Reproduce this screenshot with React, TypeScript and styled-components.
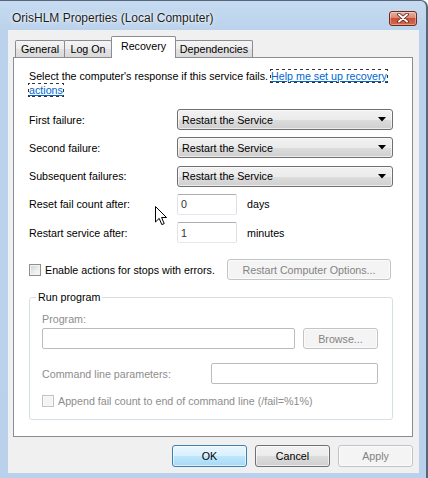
import React from "react";
import styled, { createGlobalStyle } from "styled-components";

const GlobalStyle = createGlobalStyle`
  html, body {
    margin: 0;
    padding: 0;
    background: #fff;
  }
  body {
    font-family: "Liberation Sans", Arial, sans-serif;
  }
`;

const Window = styled.div`
  position: relative;
  width: 428px;
  height: 478px;
  box-sizing: border-box;
  display: flex;
  flex-direction: column;
  background: linear-gradient(to bottom, #c6dbf1 0, #bad2eb 30px, #b9d1ea 100%);
  border-top: 1px solid #56677a;
  border-right: 2px solid #56677a;
  border-top-right-radius: 7px;
  overflow: hidden;
  font-family: "Liberation Sans", Arial, sans-serif;
  font-size: 10.7px;
  color: #000;
`;

const TitleBar = styled.div`
  height: 29px;
  box-sizing: border-box;
  padding: 5px 9px 0 12px;
  display: flex;
  align-items: center;
`;

const Title = styled.div`
  font-size: 12px;
  color: #1b1b1b;
  text-shadow: 0 0 6px rgba(255, 255, 255, 0.95), 0 0 2px #fff;
`;

const CloseButton = styled.div`
  margin-left: auto;
  width: 28px;
  height: 15px;
  box-sizing: border-box;
  border: 1px solid #6d2a1e;
  border-radius: 3px;
  background: linear-gradient(
    to bottom,
    #eab0a2 0%,
    #dc8670 45%,
    #c8503a 50%,
    #d8684a 100%
  );
  box-shadow: inset 0 0 0 1px rgba(255, 255, 255, 0.35);
  display: flex;
  align-items: center;
  justify-content: center;
`;

const Client = styled.div`
  flex: 1;
  margin: 0 7px 5px 8px;
  padding: 6px 6px 0 5px;
  background: #f0f0f0;
  display: flex;
  flex-direction: column;
`;

const TabStrip = styled.div`
  height: 22px;
  margin-bottom: -1px;
  padding-left: 2px;
  display: flex;
  align-items: flex-start;
  position: relative;
  z-index: 1;
`;

const Tab = styled.div<{ $w: number; $active?: boolean }>`
  width: ${(p) => p.$w}px;
  box-sizing: border-box;
  margin-left: -1px;
  &:first-child {
    margin-left: 0;
  }
  border: 1px solid #898c95;
  border-bottom: none;
  border-radius: 2px 2px 0 0;
  display: flex;
  align-items: center;
  justify-content: center;
  margin-top: ${(p) => (p.$active ? 0 : 4)}px;
  height: ${(p) => (p.$active ? 22 : 17)}px;
  padding-bottom: ${(p) => (p.$active ? 3 : 0)}px;
  background: ${(p) =>
    p.$active
      ? "#fff"
      : "linear-gradient(to bottom, #f4f4f4 0%, #ececec 50%, #e2e2e2 51%, #dadada 100%)"};
  position: relative;
  z-index: ${(p) => (p.$active ? 2 : 1)};
`;

const Panel = styled.div`
  height: 380px;
  box-sizing: border-box;
  background: #fff;
  border: 1px solid #898c95;
  padding: 11px 19px 0 15px;
  display: flex;
  flex-direction: column;
`;

const Intro = styled.p`
  margin: 0;
  line-height: 14px;
`;

const Link = styled.a`
  color: #0066cc;
  text-decoration: underline;
  outline: 1px dotted #333;
  cursor: pointer;
`;

const FormGrid = styled.div`
  margin-top: 12px;
  display: grid;
  grid-template-columns: 148px 1fr;
  grid-auto-rows: 21px;
  row-gap: 7.25px;
  align-items: center;
`;

const Label = styled.span<{ $disabled?: boolean }>`
  line-height: 14px;
  color: ${(p) => (p.$disabled ? "#8d8d8d" : "#000")};
  white-space: nowrap;
`;

const Combo = styled.div`
  height: 21px;
  box-sizing: border-box;
  border: 1px solid #707070;
  border-radius: 3px;
  background: linear-gradient(
    to bottom,
    #f2f2f2 0%,
    #ebebeb 50%,
    #dddddd 51%,
    #cfcfcf 100%
  );
  box-shadow: inset 0 0 0 1px rgba(255, 255, 255, 0.6);
  padding: 0 6px 0 4px;
  display: flex;
  align-items: center;
  justify-content: space-between;
`;

const InputCell = styled.div`
  display: flex;
  align-items: center;
`;

const TextBox = styled.div<{ $w: number; $disabled?: boolean }>`
  width: ${(p) => p.$w}px;
  height: 21px;
  box-sizing: border-box;
  border: 1px solid;
  border-color: ${(p) =>
    p.$disabled ? "#bcbcbc" : "#abadb3 #dbdfe6 #e3e9ef #e2e3ea"};
  border-radius: 2px;
  background: #fff;
  padding-left: 3px;
  display: flex;
  align-items: center;
  color: #333;
`;

const Unit = styled.span`
  margin-left: 10px;
`;

const CheckRow = styled.div`
  margin-top: 16px;
  height: 21px;
  display: flex;
  align-items: center;
`;

const CheckBox = styled.span<{ $disabled?: boolean }>`
  width: 12px;
  height: 12px;
  box-sizing: border-box;
  flex-shrink: 0;
  border: 1px solid ${(p) => (p.$disabled ? "#c2c2c2" : "#8e8f8f")};
  background: ${(p) =>
    p.$disabled
      ? "#f4f4f4"
      : "linear-gradient(135deg, #cfd1d4 0%, #eeeeee 60%, #fafafa 100%)"};
  box-shadow: inset 0 0 0 1px ${(p) => (p.$disabled ? "#f8f8f8" : "#f2f2f2")};
  margin-right: 4px;
`;

const Button = styled.div<{ $w: number; $variant?: "default" | "primary" | "disabled" }>`
  width: ${(p) => p.$w}px;
  height: 21px;
  box-sizing: border-box;
  border-radius: 3px;
  display: flex;
  align-items: center;
  justify-content: center;
  border: 1px solid
    ${(p) =>
      p.$variant === "primary"
        ? "#3c7fb1"
        : p.$variant === "disabled"
        ? "#c2c5c8"
        : "#707070"};
  color: ${(p) => (p.$variant === "disabled" ? "#838383" : "#000")};
  background: ${(p) =>
    p.$variant === "primary"
      ? "linear-gradient(to bottom, #eaf6fd 0%, #d9f0fc 50%, #bee6fd 51%, #a7d9f5 100%)"
      : p.$variant === "disabled"
      ? "#f4f4f4"
      : "linear-gradient(to bottom, #f2f2f2 0%, #ebebeb 50%, #dddddd 51%, #cfcfcf 100%)"};
  box-shadow: inset 0 0 0 1px rgba(255, 255, 255, 0.6);
`;

const SideButton = styled(Button)`
  margin-right: 2px;
  margin-left: auto;
`;

const Group = styled.fieldset`
  margin: 10px 0 0 0;
  padding: 8px 14px 11px 12px;
  border: 1px solid #d5dfe5;
  border-radius: 3px;
  min-width: 0;
`;

const Legend = styled.legend`
  margin-left: -6px;
  padding: 0 2px;
  line-height: 14px;
`;

const FieldRow = styled.div<{ $mt: number }>`
  margin-top: ${(p) => p.$mt}px;
  display: flex;
  align-items: center;
`;

const CmdLabel = styled(Label)`
  width: 169px;
`;

const Footer = styled.div`
  margin-top: 8px;
  display: flex;
  justify-content: flex-end;
  gap: 8px;
`;

const FooterButton = styled(Button)`
  height: 22px;
`;

const Cursor = styled.svg`
  position: absolute;
  left: 155px;
  top: 205px;
`;

const failures = ["First failure:", "Second failure:", "Subsequent failures:"];

const Arrow = () => (
  <svg width="8" height="5" viewBox="0 0 8 5">
    <path d="M0 0 H8 L4 4.5 Z" fill="#000" />
  </svg>
);

export default function App() {
  return (
    <>
      <GlobalStyle />
      <Window>
        <TitleBar>
          <Title>OrisHLM Properties (Local Computer)</Title>
          <CloseButton>
            <svg width="12" height="10" viewBox="0 0 12 10">
              <path d="M2 1.5 L10 8.5 M10 1.5 L2 8.5" stroke="#5a2118" strokeWidth="3.6" strokeLinecap="round" />
              <path d="M2 1.5 L10 8.5 M10 1.5 L2 8.5" stroke="#fff" strokeWidth="2" strokeLinecap="round" />
            </svg>
          </CloseButton>
        </TitleBar>
        <Client>
          <TabStrip>
            <Tab $w={50}>General</Tab>
            <Tab $w={48}>Log On</Tab>
            <Tab $w={65} $active>
              Recovery
            </Tab>
            <Tab $w={78}>Dependencies</Tab>
          </TabStrip>
          <Panel>
            <Intro>
              Select the computer's response if this service fails.{" "}
              <Link>
                Help me set up recovery
                <br />
                actions
              </Link>
            </Intro>
            <FormGrid>
              {failures.map((f) => (
                <React.Fragment key={f}>
                  <Label>{f}</Label>
                  <Combo>
                    <span>Restart the Service</span>
                    <Arrow />
                  </Combo>
                </React.Fragment>
              ))}
              <Label>Reset fail count after:</Label>
              <InputCell>
                <TextBox $w={60}>0</TextBox>
                <Unit>days</Unit>
              </InputCell>
              <Label>Restart service after:</Label>
              <InputCell>
                <TextBox $w={60}>1</TextBox>
                <Unit>minutes</Unit>
              </InputCell>
            </FormGrid>
            <CheckRow>
              <CheckBox />
              <Label>Enable actions for stops with errors.</Label>
              <SideButton $w={164} $variant="disabled">
                Restart Computer Options...
              </SideButton>
            </CheckRow>
            <Group>
              <Legend>Run program</Legend>
              <Label $disabled>Program:</Label>
              <FieldRow $mt={2}>
                <TextBox $w={253} $disabled />
                <Button $w={75} $variant="disabled" style={{ marginLeft: 8 }}>
                  Browse...
                </Button>
              </FieldRow>
              <FieldRow $mt={14}>
                <CmdLabel $disabled>Command line parameters:</CmdLabel>
                <TextBox $w={167} $disabled />
              </FieldRow>
              <FieldRow $mt={10}>
                <CheckBox $disabled />
                <Label $disabled>
                  Append fail count to end of command line (/fail=%1%)
                </Label>
              </FieldRow>
            </Group>
          </Panel>
          <Footer>
            <FooterButton $w={75} $variant="primary">
              OK
            </FooterButton>
            <FooterButton $w={75}>Cancel</FooterButton>
            <FooterButton $w={75} $variant="disabled">
              Apply
            </FooterButton>
          </Footer>
        </Client>
        <Cursor width="13" height="20" viewBox="0 0 13 20">
          <path
            d="M0.5 0.5 L0.5 16 L4.2 12.4 L6.8 18.6 L9.2 17.6 L6.6 11.5 L11.5 11.5 Z"
            fill="#fff"
            stroke="#000"
            strokeWidth="1"
            strokeLinejoin="miter"
          />
        </Cursor>
      </Window>
    </>
  );
}
